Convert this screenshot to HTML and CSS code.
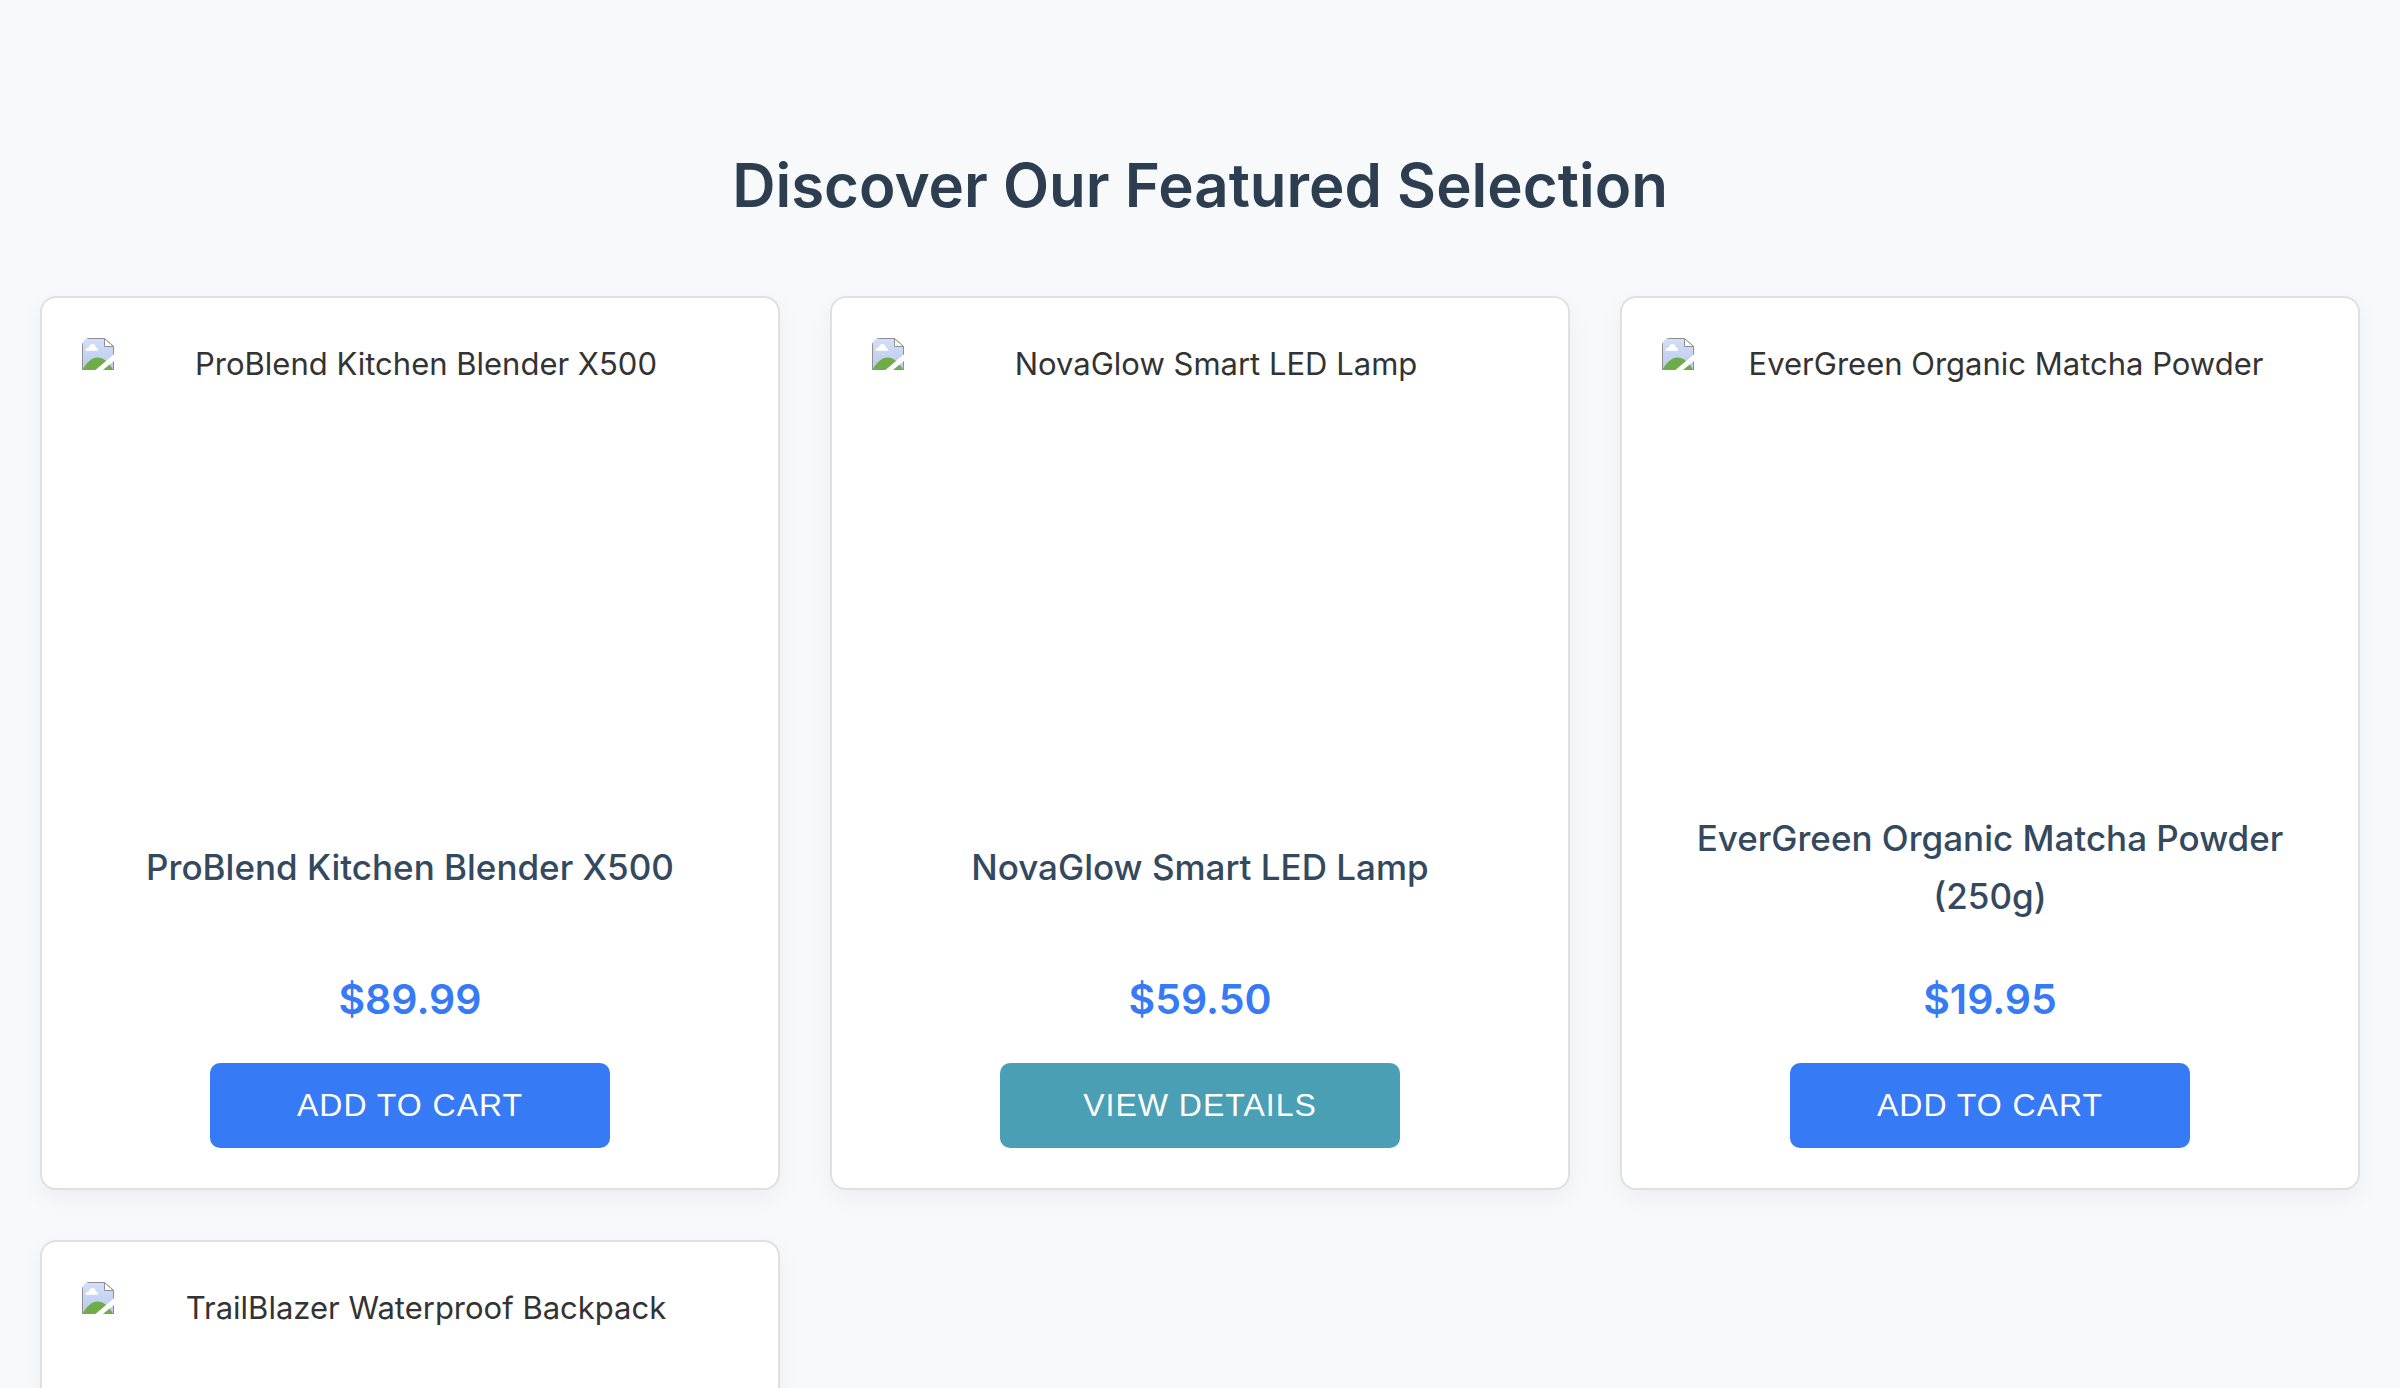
FILE: index.html
```html
<!DOCTYPE html>
<html lang="en">
<head>
<meta charset="utf-8">
<meta name="viewport" content="width=device-width, initial-scale=1">
<title>Featured Selection</title>
<link rel="stylesheet" href="styles.css">
</head>
<body>
<svg class="sprite" aria-hidden="true">
  <defs>
    <linearGradient id="sky" x1="0" y1="0" x2="0" y2="1">
      <stop offset="0" stop-color="#d3e0f9"/>
      <stop offset="1" stop-color="#b9c9ea"/>
    </linearGradient>
    <symbol id="missing-image" viewBox="0 0 32 32">
      <path fill="url(#sky)" d="M0 0h22l10 8v24H0z"/>
      <path fill="#fff" d="M3.500 12.700c0-2 1.600-3.200 3.200-3.200C7.500 7 9 6 10.500 6c2 0 3.200 1.500 3.500 3.600 1.300.2 2 1.400 2 3.100z"/>
      <path fill="#6fab49" d="M1 31c4-7 9-11.500 14.500-11.500S27 24 30.500 31z"/>
      <path fill="none" stroke="#8f8f8f" d="M.5 32V.5h21.700l9.300 7.800V32"/>
      <path stroke="#8f8f8f" d="M0 31.500h32"/>
      <path fill="#fff" stroke="#8f8f8f" d="M22.500.5v8h9z"/>
      <path fill="#fff" d="M33 15.500v6.700L20.300 32.500h-7.500z"/>
    </symbol>
  </defs>
</svg>
<main class="products">
  <h1 class="products-title">Discover Our Featured Selection</h1>
  <div class="product-grid">
    <article class="card">
      <div class="card-image"><svg class="missing-icon" aria-hidden="true"><use href="#missing-image"/></svg><span class="card-alt">ProBlend Kitchen Blender X500</span></div>
      <h2 class="card-name">ProBlend Kitchen Blender X500</h2>
      <p class="card-price">$89.99</p>
      <button class="button" type="button">Add to Cart</button>
    </article>
    <article class="card">
      <div class="card-image"><svg class="missing-icon" aria-hidden="true"><use href="#missing-image"/></svg><span class="card-alt">NovaGlow Smart LED Lamp</span></div>
      <h2 class="card-name">NovaGlow Smart LED Lamp</h2>
      <p class="card-price">$59.50</p>
      <button class="button button-details" type="button">View Details</button>
    </article>
    <article class="card">
      <div class="card-image"><svg class="missing-icon" aria-hidden="true"><use href="#missing-image"/></svg><span class="card-alt">EverGreen Organic Matcha Powder</span></div>
      <h2 class="card-name">EverGreen Organic Matcha Powder (250g)</h2>
      <p class="card-price">$19.95</p>
      <button class="button" type="button">Add to Cart</button>
    </article>
    <article class="card">
      <div class="card-image"><svg class="missing-icon" aria-hidden="true"><use href="#missing-image"/></svg><span class="card-alt">TrailBlazer Waterproof Backpack</span></div>
    </article>
  </div>
</main>
</body>
</html>
```
FILE: styles.css
```css
* {
  box-sizing: border-box;
}

body {
  margin: 0;
  background: #f8f9fb;
  color: #333;
  font-family: Inter, "Liberation Sans", sans-serif;
  font-size: 31px;
  line-height: 51px;
}

.sprite {
  position: absolute;
  width: 0;
  height: 0;
}

.products {
  padding: 134px 40px 80px;
}

.products-title {
  margin: 0 0 60px;
  color: #2c3e50;
  font-size: 60px;
  font-weight: 600;
  line-height: 102px;
  text-align: center;
}

.product-grid {
  display: grid;
  grid-template-columns: repeat(auto-fill, minmax(600px, 1fr));
  gap: 50px;
}

.card {
  display: flex;
  flex-direction: column;
  align-items: center;
  padding: 40px;
  border: 2px solid #e0e0e0;
  border-radius: 16px;
  background: #fff;
  box-shadow: 0 8px 24px rgba(0, 0, 0, 0.05);
  text-align: center;
}

.card-image {
  display: flex;
  align-items: flex-start;
  width: 100%;
  height: 440px;
  margin-bottom: 30px;
  border-radius: 8px;
  overflow: hidden;
}

.missing-icon {
  flex: none;
  width: 32px;
  height: 32px;
}

.card-alt {
  flex: 1;
}

.card-name {
  display: flex;
  align-items: center;
  justify-content: center;
  min-height: 118px;
  margin: 0 0 40px;
  color: #34495e;
  font-size: 35px;
  font-weight: 500;
  line-height: 58px;
}

.card-price {
  margin: 0 0 30px;
  color: #367af6;
  font-size: 41px;
  font-weight: 600;
  line-height: 67px;
}

.button {
  width: 400px;
  max-width: 100%;
  padding: 24px;
  border: 0;
  border-radius: 10px;
  background: #367af6;
  color: #fff;
  font-family: "Liberation Sans", Arial, sans-serif;
  font-size: 32px;
  letter-spacing: 1px;
  line-height: 37px;
  text-transform: uppercase;
  cursor: pointer;
}

.button-details {
  background: #4b9fb5;
}
```
